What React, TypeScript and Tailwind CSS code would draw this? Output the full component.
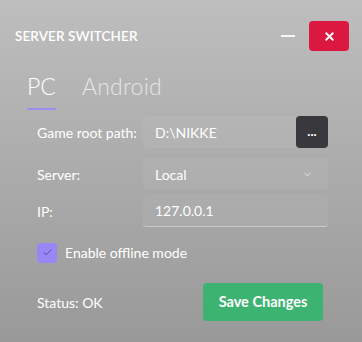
import { Check, ChevronDown, X } from "lucide-react";

const font = { fontFamily: "Lato, 'Noto Sans', sans-serif" };

export default function App() {
  return (
    <div
      className="w-[362px] h-[342px] bg-gradient-to-b from-[#bebebe] to-[#999999] text-white overflow-hidden"
      style={font}
    >
      {/* Title bar */}
      <div className="flex items-center h-[30px] mt-[21px] pl-[15px] pr-[13px]">
        <span className="text-[13.5px] font-semibold tracking-[0.1px] pt-[1px]">SERVER SWITCHER</span>
        <div className="ml-auto flex items-center gap-[14px]">
          <div className="w-[14px] h-[1.5px] bg-white/90" />
          <button className="w-[40px] h-[30px] rounded-[4px] bg-[#dc1740] flex items-center justify-center">
            <X size={13} strokeWidth={3.5} className="text-white" />
          </button>
        </div>
      </div>

      {/* Tabs */}
      <div className="flex gap-[26px] pl-[27px] mt-[20px]">
        <div className="flex flex-col">
          <span className="text-[23px] font-light leading-[30px]">PC</span>
          <div className="h-[2px] w-[29px] mt-[7px] bg-[#9c8ef0] rounded-full" />
        </div>
        <span className="text-[23px] font-light leading-[30px] text-white/70 tracking-[0.2px]">Android</span>
      </div>

      {/* Form */}
      <div className="pl-[37px] pr-[34px] mt-[6px] flex flex-col gap-[10px] text-[14px]">
        <div className="flex items-center h-[32px]">
          <span className="w-[106px]">Game root path:</span>
          <div className="flex-1 h-full flex items-center pl-[12px] bg-white/5 rounded-l-[4px]">D:\NIKKE</div>
          <button className="w-[32px] h-[32px] rounded-[4px] bg-[#39393d] flex items-center justify-center font-bold text-[13px] leading-none pb-[2px]">
            ...
          </button>
        </div>
        <div className="flex items-center h-[32px]">
          <span className="w-[106px]">Server:</span>
          <div className="flex-1 h-full flex items-center pl-[12px] pr-[15px] bg-white/5 rounded-[4px]">
            <span>Local</span>
            <ChevronDown size={11} className="ml-auto text-white/70" />
          </div>
        </div>
        <div className="flex items-center h-[32px] -mt-[5px]">
          <span className="w-[106px]">IP:</span>
          <div className="flex-1 h-full flex items-center pl-[12px] bg-white/5 rounded-[4px] border-b border-white/40">
            127.0.0.1
          </div>
        </div>

        <label className="flex items-center gap-[8px] mt-[5px]">
          <span className="w-[20px] h-[20px] rounded-[4px] bg-[#9a86f6] flex items-center justify-center">
            <Check size={11} strokeWidth={1.5} className="text-[#3a3360]" />
          </span>
          <span>Enable offline mode</span>
        </label>

        <div className="flex items-center mt-[10px]">
          <span>Status: OK</span>
          <button className="ml-auto mr-[5px] w-[120px] h-[38px] rounded-[4px] bg-[#3cb371] font-bold text-[14.5px]">
            Save Changes
          </button>
        </div>
      </div>
    </div>
  );
}
